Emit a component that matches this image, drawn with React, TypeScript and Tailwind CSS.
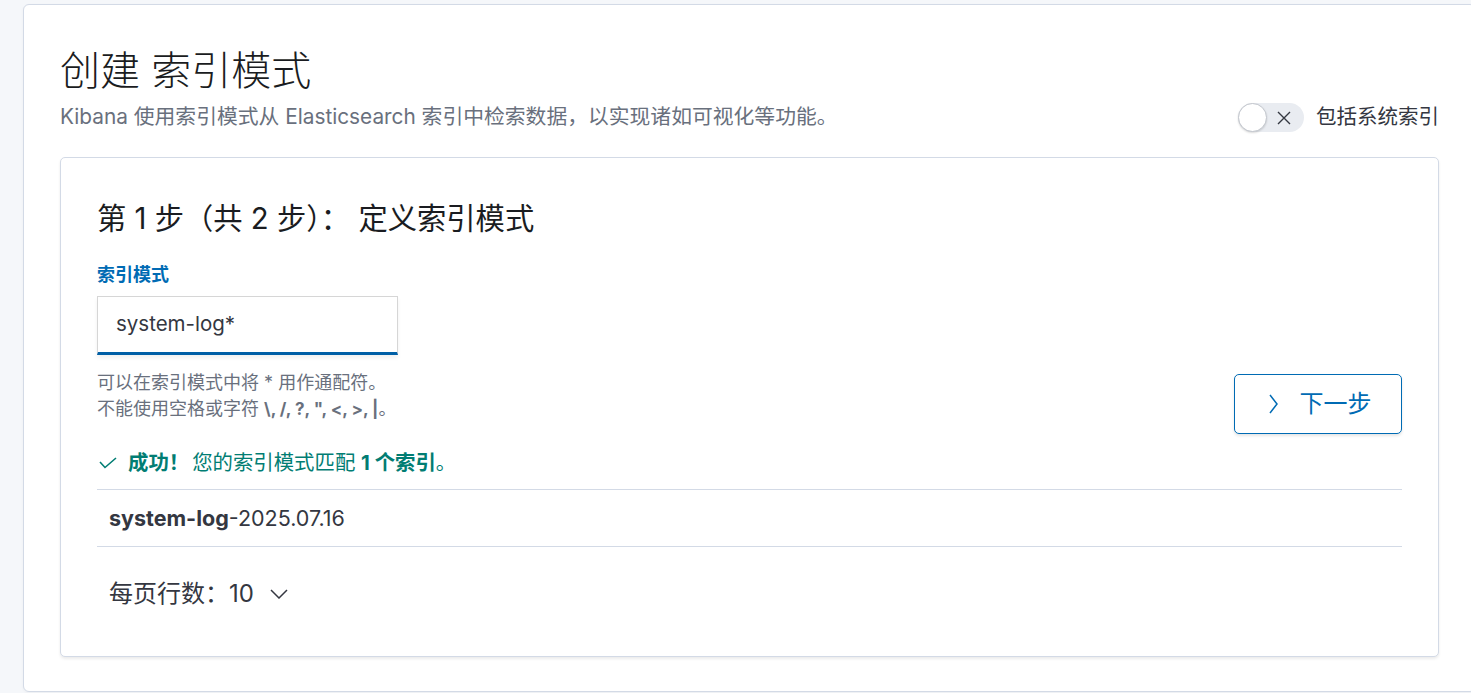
import React from "react";

const FONT = { fontFamily: "Inter, 'Noto Sans CJK SC', sans-serif" };

export default function App() {
  return (
    <div className="w-full h-[693px] overflow-hidden bg-[#f5f7fa]" style={FONT}>
      <div className="ml-[23px] mt-[4px] w-[1453px] rounded-[6px] border border-[#d3dae6] bg-white px-[36px] pt-[42px] pb-[34px] shadow-[0_1px_3px_rgba(0,0,0,0.04)]">
        <h1 className="text-[40px] leading-[48px] font-light text-[#1a1c21]">创建 索引模式</h1>
        <div className="mt-[8px] flex items-center justify-between h-[28px]">
          <p className="text-[20.8px] leading-[28px] text-[#69707d]">
            Kibana 使用索引模式从 Elasticsearch 索引中检索数据，以实现诸如可视化等功能。
          </p>
          <div className="flex items-center gap-[12px]">
            <div className="relative w-[66px] h-[29px] rounded-full bg-[#e9ecf1]">
              <div className="absolute left-0 top-0 w-[29px] h-[29px] rounded-full bg-white border border-[#c2c6cd] shadow-[0_1px_2px_rgba(0,0,0,0.15)]" />
              <svg className="absolute left-[39px] top-[8px]" width="14" height="14" viewBox="0 0 14 14">
                <path d="M1 1 L13 13 M13 1 L1 13" stroke="#343741" strokeWidth="1.4" fill="none" />
              </svg>
            </div>
            <span className="text-[20.5px] leading-[28px] text-[#343741]">包括系统索引</span>
          </div>
        </div>

        <div className="mt-[26px] rounded-[5px] border border-[#d3dae6] bg-white px-[36px] pt-[43px] pb-[48px] shadow-[0_2px_3px_rgba(0,0,0,0.08)]">
          <h2 className="text-[29.3px] leading-[36px] text-[#1a1c21]">第 1 步（共 2 步）： 定义索引模式</h2>
          <div className="mt-[26px] flex items-start justify-between">
            <div>
              <div className="text-[18px] leading-[24px] font-bold text-[#006bb4]">索引模式</div>
              <div className="mt-[9px] w-[301px] h-[59px] border border-[#d6d6d6] border-b-[3px] border-b-[#005fa6] bg-white flex items-center pl-[18px] shadow-[0_3px_4px_rgba(0,0,0,0.06)]">
                <span className="text-[20.5px] text-[#343741]">system-log*</span>
              </div>
              <div className="mt-[15px] text-[18px] leading-[26px] text-[#69707d]">
                <div>可以在索引模式中将 * 用作通配符。</div>
                <div>
                  不能使用空格或字符 <b className="text-[17px]">\, /, ?, ", &lt;, &gt;, |</b>。
                </div>
              </div>
            </div>
            <button className="mt-[111px] w-[168px] h-[60px] rounded-[5px] border border-[#006bb4] bg-white flex items-center justify-center gap-[22px] text-[#006bb4] shadow-[0_2px_3px_rgba(0,0,0,0.1)]">
              <svg className="ml-[4px]" width="9" height="20" viewBox="0 0 9 20">
                <path d="M1 1 L8 10 L1 19" stroke="#006bb4" strokeWidth="1.5" fill="none" />
              </svg>
              <span className="text-[24px] leading-[28px]">下一步</span>
            </button>
          </div>

          <div className="mt-[15px] flex items-center h-[28px] text-[20.4px] leading-[28px] text-[#017d73]">
            <svg className="ml-[2px] mr-[11px]" width="18" height="12" viewBox="0 0 18 12">
              <path d="M1 5 L6 10.5 L17 1" stroke="#017d73" strokeWidth="1.6" fill="none" />
            </svg>
            <b>成功！</b>
            <span className="ml-[3px]">您的索引模式匹配 <b>1 个索引</b>。</span>
          </div>

          <div className="mt-[12px] border-t border-b border-[#d3dae6] h-[58px] flex items-center pl-[12px] text-[21.5px] text-[#343741]">
            <b>system-log</b>
            <span>-2025.07.16</span>
          </div>

          <div className="mt-[33px] flex items-center h-[28px] pl-[12px] text-[24px] leading-[28px] text-[#343741]">
            <span>每页行数：10</span>
            <svg className="ml-[16px]" width="18" height="10" viewBox="0 0 18 10">
              <path d="M1 1 L9 9 L17 1" stroke="#343741" strokeWidth="1.5" fill="none" />
            </svg>
          </div>
        </div>
      </div>
    </div>
  );
}
